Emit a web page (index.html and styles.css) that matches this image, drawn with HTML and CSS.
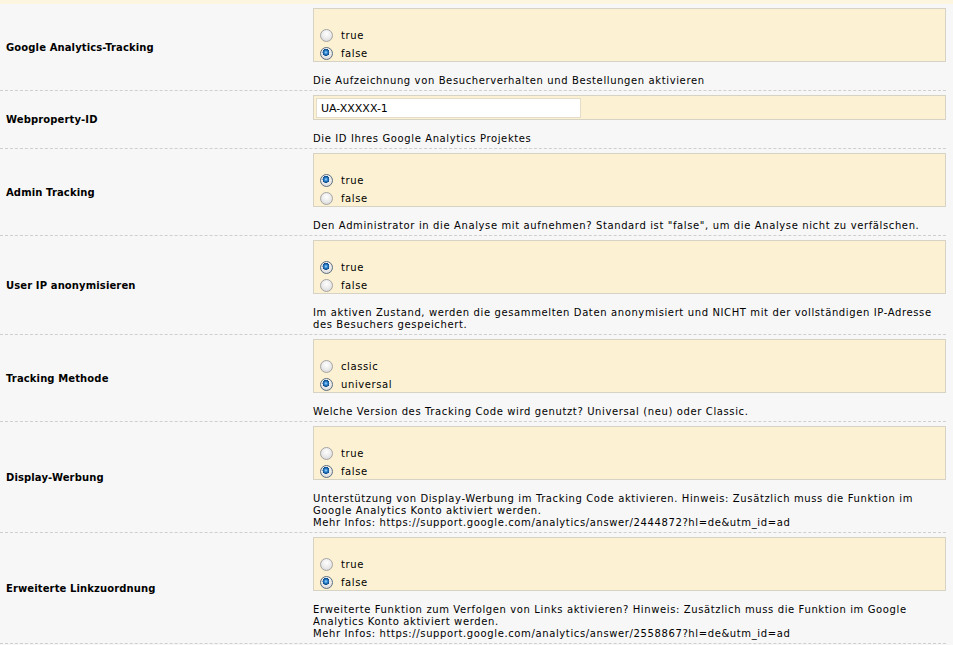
FILE: index.html
```html
<!DOCTYPE html>
<html lang="de">
<head>
<meta charset="utf-8">
<title>Google Analytics</title>
<link rel="stylesheet" href="styles.css">
</head>
<body>
<div class="topstrip"></div>
<div class="list">
  <div class="row">
    <div class="label">Google Analytics-Tracking</div>
    <div class="field">
      <div class="box radios">
        <label class="opt"><input type="radio" name="r1"><span>true</span></label>
        <label class="opt"><input type="radio" name="r1" checked><span>false</span></label>
      </div>
      <div class="desc">Die Aufzeichnung von Besucherverhalten und Bestellungen aktivieren</div>
    </div>
  </div>
  <div class="row">
    <div class="label">Webproperty-ID</div>
    <div class="field">
      <div class="box textbox"><input class="text" type="text" value="UA-XXXXX-1"></div>
      <div class="desc">Die ID Ihres Google Analytics Projektes</div>
    </div>
  </div>
  <div class="row">
    <div class="label">Admin Tracking</div>
    <div class="field">
      <div class="box radios">
        <label class="opt"><input type="radio" name="r3" checked><span>true</span></label>
        <label class="opt"><input type="radio" name="r3"><span>false</span></label>
      </div>
      <div class="desc">Den Administrator in die Analyse mit aufnehmen? Standard ist "false", um die Analyse nicht zu verfälschen.</div>
    </div>
  </div>
  <div class="row">
    <div class="label">User IP anonymisieren</div>
    <div class="field">
      <div class="box radios">
        <label class="opt"><input type="radio" name="r4" checked><span>true</span></label>
        <label class="opt"><input type="radio" name="r4"><span>false</span></label>
      </div>
      <div class="desc">Im aktiven Zustand, werden die gesammelten Daten anonymisiert und NICHT mit der vollständigen IP-Adresse des Besuchers gespeichert.</div>
    </div>
  </div>
  <div class="row">
    <div class="label">Tracking Methode</div>
    <div class="field">
      <div class="box radios">
        <label class="opt"><input type="radio" name="r5"><span>classic</span></label>
        <label class="opt"><input type="radio" name="r5" checked><span>universal</span></label>
      </div>
      <div class="desc">Welche Version des Tracking Code wird genutzt? Universal (neu) oder Classic.</div>
    </div>
  </div>
  <div class="row">
    <div class="label">Display-Werbung</div>
    <div class="field">
      <div class="box radios">
        <label class="opt"><input type="radio" name="r6"><span>true</span></label>
        <label class="opt"><input type="radio" name="r6" checked><span>false</span></label>
      </div>
      <div class="desc">Unterstützung von Display-Werbung im Tracking Code aktivieren. Hinweis: Zusätzlich muss die Funktion im Google Analytics Konto aktiviert werden.<br>Mehr Infos: https://support.google.com/analytics/answer/2444872?hl=de&amp;utm_id=ad</div>
    </div>
  </div>
  <div class="row">
    <div class="label">Erweiterte Linkzuordnung</div>
    <div class="field">
      <div class="box radios">
        <label class="opt"><input type="radio" name="r7"><span>true</span></label>
        <label class="opt"><input type="radio" name="r7" checked><span>false</span></label>
      </div>
      <div class="desc">Erweiterte Funktion zum Verfolgen von Links aktivieren? Hinweis: Zusätzlich muss die Funktion im Google Analytics Konto aktiviert werden.<br>Mehr Infos: https://support.google.com/analytics/answer/2558867?hl=de&amp;utm_id=ad</div>
    </div>
  </div>
</div>
</body>
</html>
```

FILE: styles.css
```css
html, body {
  margin: 0;
  padding: 0;
  background: #f7f7f7;
}
body {
  font-family: "DejaVu Sans", Verdana, sans-serif;
  font-size: 10px;
  color: #000;
}
.topstrip {
  height: 4px;
  background: #fcf5df;
}
.list {
  padding-right: 7px;
}
.row {
  display: grid;
  grid-template-columns: 313px 1fr;
  align-items: center;
  border-bottom: 1px dashed #cfcfcf;
}
.label {
  padding-left: 6px;
  font-weight: bold;
  letter-spacing: 0.12px;
}
.field {
  padding: 4px 0 3px 0;
}
.box {
  background: #fcf1d2;
  border: 1px solid #d6d2c4;
}
.radios {
  padding: 16px 6px 0 6px;
}
.opt {
  display: flex;
  align-items: center;
  height: 18px;
  padding-top: 2px;
  box-sizing: border-box;
  letter-spacing: 0.6px;
}
.opt span {
  margin-left: 8px;
}
.opt input {
  appearance: none;
  -webkit-appearance: none;
  margin: 0;
  width: 13px;
  height: 13px;
  border-radius: 50%;
  border: 1px solid #a4a4a4;
  background: radial-gradient(circle at 50% 35%, #ffffff 0%, #e9e9e9 55%, #cfcfcf 100%);
  box-sizing: border-box;
  flex: none;
}
.opt input:checked {
  border-color: #5f7080;
  background:
    radial-gradient(circle at 45% 40%, #a9dcff 0, #2f86d0 1.6px, #0c4a88 3.3px, rgba(0,0,0,0) 3.6px),
    radial-gradient(circle at 50% 35%, #ffffff 0%, #e6e6e6 60%, #c9c9c9 100%);
}
.textbox {
  padding: 2px 2px 1px 2px;
}
.text {
  display: block;
  box-sizing: border-box;
  width: 265px;
  height: 20px;
  margin: 0;
  padding: 0 4px;
  border: 1px solid #e2dcc8;
  background: #fff;
  font-family: "DejaVu Sans", Verdana, sans-serif;
  font-size: 11px;
  color: #000;
  outline: none;
}
.desc {
  margin-top: 13px;
  line-height: 12px;
  letter-spacing: 0.62px;
}
```
